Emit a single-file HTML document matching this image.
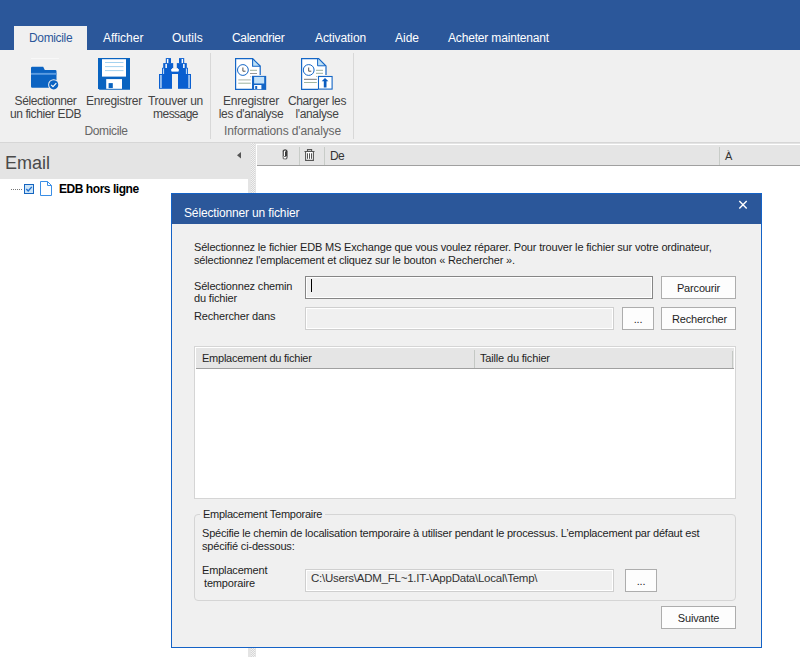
<!DOCTYPE html>
<html><head><meta charset="utf-8">
<style>
*{margin:0;padding:0;box-sizing:border-box}
html,body{width:800px;height:657px;overflow:hidden;background:#fff;font-family:"Liberation Sans",sans-serif;color:#222}
.a{position:absolute;white-space:nowrap}
.t12{font-size:12px;line-height:12px}
.t11{font-size:11px;line-height:11px;letter-spacing:-0.17px;color:#1e1e1e}
#topbar{position:absolute;left:0;top:0;width:800px;height:50px;background:#2b579a}
.tab{color:#fff}
#ribbon{position:absolute;left:0;top:50px;width:800px;height:93px;background:#f0f0f0;border-bottom:1px solid #d6d6d6}
.rb{color:#444}
.sep{position:absolute;top:53px;width:1px;height:86px;background:#d8d8d8}
#lhead{position:absolute;left:0;top:143px;width:248px;height:36px;background:#e4e4e4}
#split{position:absolute;left:248px;top:143px;width:8px;height:514px;background:#e4e4e4}
#chk{position:absolute;left:251px;top:143px;width:4px;height:514px;background-color:#f2f2f2;background-image:conic-gradient(#d6d6d6 25%,transparent 0 50%,#d6d6d6 0 75%,transparent 0);background-size:2px 2px}
#rpane{position:absolute;left:256px;top:144px;width:544px;height:513px;background:#fff}
#rtop{position:absolute;left:256px;top:143px;width:544px;height:1px;background:#e4e4e4}
#rhead{position:absolute;left:257px;top:145px;width:543px;height:21px;background:#e5e5e5;border-bottom:1px solid #a0a0a0}
#dlg{position:absolute;left:171px;top:193px;width:591px;height:455px;background:#f0f0f0;border:1px solid #1462c6}
#dtitle{position:absolute;left:0;top:0;width:589px;height:30px;background:#2b579a}
.box{position:absolute}
.btn{position:absolute;background:#fdfdfd;border:1px solid #adadad}
.tb{position:absolute;border:1px solid #868686;background:#f0f0f0;box-shadow:inset 0 0 0 1px #fff}
.tbd{position:absolute;border:1px solid #cfcfcf;background:#f0f0f0;box-shadow:inset 0 0 0 1px #fff}
</style></head><body>
<div id="topbar"></div>
<div class="a" style="left:14px;top:26px;width:73px;height:24px;background:#f0f0f0"></div>
<div class="a t12" style="left:29px;top:32px;color:#2b579a;letter-spacing:-0.35px">Domicile</div>
<div class="a t12 tab" style="left:103px;top:32px">Afficher</div>
<div class="a t12 tab" style="left:172px;top:32px">Outils</div>
<div class="a t12 tab" style="left:232px;top:32px;letter-spacing:-0.3px">Calendrier</div>
<div class="a t12 tab" style="left:315px;top:32px;letter-spacing:-0.1px">Activation</div>
<div class="a t12 tab" style="left:395px;top:32px">Aide</div>
<div class="a t12 tab" style="left:448px;top:32px;letter-spacing:-0.17px">Acheter maintenant</div>

<div id="ribbon"></div>
<div class="sep" style="left:210px"></div>
<div class="sep" style="left:353px"></div>

<!-- ribbon labels -->
<div class="a t12 rb" style="left:0;top:95px;width:91px;text-align:center;letter-spacing:-0.4px">Sélectionner</div>
<div class="a t12 rb" style="left:0;top:108px;width:91px;text-align:center;letter-spacing:-0.4px">un fichier EDB</div>
<div class="a t12 rb" style="left:86px;top:95px;width:56px;text-align:center;letter-spacing:-0.25px">Enregistrer</div>
<div class="a t12 rb" style="left:146px;top:95px;width:59px;text-align:center;letter-spacing:-0.25px">Trouver un</div>
<div class="a t12 rb" style="left:146px;top:108px;width:59px;text-align:center;letter-spacing:-0.55px">message</div>
<div class="a t12 rb" style="left:66px;top:125px;width:80px;text-align:center;color:#666;letter-spacing:-0.35px">Domicile</div>
<div class="a t12 rb" style="left:217px;top:95px;width:68px;text-align:center;letter-spacing:-0.25px">Enregistrer</div>
<div class="a t12 rb" style="left:217px;top:108px;width:68px;text-align:center;letter-spacing:-0.35px">les d'analyse</div>
<div class="a t12 rb" style="left:286px;top:95px;width:62px;text-align:center;letter-spacing:-0.35px">Charger les</div>
<div class="a t12 rb" style="left:286px;top:108px;width:62px;text-align:center;letter-spacing:-0.35px">l'analyse</div>
<div class="a t12 rb" style="left:212px;top:125px;width:141px;text-align:center;color:#666;letter-spacing:-0.12px">Informations d'analyse</div>

<!-- panes -->
<div id="lhead"></div>
<div class="a" style="left:5px;top:154px;font-size:18px;line-height:18px;color:#4a4a4a">Email</div>
<div id="split"></div><div id="chk"></div><div id="rtop"></div>
<div id="rpane"></div>
<div id="rhead"></div>
<div class="a t12" style="left:330px;top:150px;color:#333;letter-spacing:-0.6px">De</div>
<div class="a" style="left:725px;top:150px;color:#333;font-size:11px;line-height:12px">À</div>
<div class="a t12" style="left:59px;top:183px;font-weight:bold;color:#000;letter-spacing:-0.45px">EDB hors ligne</div>


<!-- icons -->
<svg class="a" style="left:26px;top:54px" width="40" height="40" viewBox="0 0 40 40">
  <rect x="5" y="4" width="28" height="0.8" fill="#fafafa"/>
  <path d="M5 14 Q5 12.8 6.2 12.8 L17.2 12.8 L18.8 16 L29.3 16 Q30.5 16 30.5 17.2 L30.5 33.8 L6.2 33.8 Q5 33.8 5 32.6 Z" fill="#0b63c2"/>
  <rect x="5" y="18.9" width="25.5" height="1.9" fill="#5a9be0"/>
  <circle cx="27.7" cy="30.8" r="5.6" fill="#f0f0f0"/>
  <circle cx="27.7" cy="30.8" r="4.6" fill="#0b63c2"/>
  <path d="M25.2 30.9 L27 32.7 L30.3 29.2" stroke="#fff" stroke-width="1.1" fill="none"/>
</svg>
<svg class="a" style="left:94px;top:54px" width="40" height="40" viewBox="0 0 40 40">
  <path d="M4 4 L36 4 L36 35.8 L5.5 35.8 L4 34.3 Z" fill="#0963c0"/>
  <rect x="8" y="5.2" width="24" height="17.4" fill="#fff"/>
  <rect x="11" y="8" width="18.5" height="1" fill="#a4d2ef"/>
  <rect x="11" y="12.1" width="18.5" height="1" fill="#a4d2ef"/>
  <rect x="11" y="16.1" width="18.5" height="1" fill="#a4d2ef"/>
  <rect x="12.2" y="25.1" width="15.8" height="9.7" fill="#fff"/>
  <rect x="14.6" y="29.1" width="4.2" height="5" fill="#0963c0"/>
</svg>
<svg class="a" style="left:155px;top:54px" width="40" height="40" viewBox="0 0 40 40">
  <g fill="#0a5fd0">
    <rect x="4" y="20" width="13" height="14.8"/><rect x="7" y="13.8" width="10" height="6.5"/><rect x="8.2" y="9.1" width="10" height="5"/><rect x="10.8" y="4.1" width="5.2" height="5"/>
    <rect x="23" y="20" width="13" height="14.8"/><rect x="23" y="13.8" width="10" height="6.5"/><rect x="21.8" y="9.1" width="10" height="5"/><rect x="24" y="4.1" width="5.2" height="5"/>
    <rect x="16" y="17.4" width="8" height="2.6"/>
  </g>
  <g fill="#b8d4f4">
    <rect x="5.2" y="21" width="1.5" height="13"/><rect x="33.3" y="21" width="1.5" height="13"/>
    <rect x="7.9" y="14.5" width="1.2" height="5.5"/><rect x="30.9" y="14.5" width="1.2" height="5.5"/>
  </g>
  <g fill="#ffffff">
    <rect x="10.4" y="10" width="1.5" height="4"/><rect x="28.1" y="10" width="1.5" height="4"/>
    <rect x="11.9" y="5" width="1.5" height="4"/><rect x="26.6" y="5" width="1.5" height="4"/>
    <rect x="16.2" y="15" width="7.6" height="2.4"/>
  </g>
</svg>
<svg class="a" style="left:231px;top:54px" width="40" height="40" viewBox="0 0 40 40">
  <path d="M4.6 4.6 L21.6 4.6 L29.2 12 L29.2 21 L21 21 L21 35.2 L4.6 35.2 Z" fill="#fff"/>
  <path d="M21.6 4.6 L21.6 12.3 L29.2 12.3 Z" fill="#bde0f6"/>
  <path d="M21.2 35.4 L4.6 35.4 L4.6 4.6 L21.6 4.6 L29.2 12 L29.2 21" stroke="#1466c6" stroke-width="1.2" fill="none"/>
  <path d="M21.6 4.6 L21.6 12.3 L29.2 12.3" stroke="#1466c6" stroke-width="1.1" fill="none"/>
  <circle cx="11.9" cy="16" r="5.4" stroke="#1466c6" stroke-width="1" fill="#fff"/>
  <path d="M11.9 13.5 L11.9 17.2 L14.5 17.2" stroke="#555" stroke-width="1" fill="none"/>
  <rect x="19" y="15.8" width="7" height="1" fill="#9fb49f"/>
  <rect x="19" y="19" width="7" height="1" fill="#999"/>
  <rect x="19.3" y="22.2" width="0.9" height="1" fill="#999"/>
  <rect x="7.3" y="25.4" width="12.5" height="1" fill="#a9b4a9"/>
  <rect x="7.3" y="28.7" width="12.5" height="1" fill="#9fb49f"/>
  <rect x="21" y="21.9" width="14.2" height="14" fill="#1466c6"/>
  <rect x="23.1" y="22.9" width="10.1" height="6.6" fill="#c4e2f8"/>
  <rect x="23.1" y="31" width="7.3" height="4.2" fill="#fff"/>
  <rect x="24.2" y="32" width="2" height="3" fill="#1466c6"/>
</svg>
<svg class="a" style="left:297px;top:54px" width="40" height="40" viewBox="0 0 40 40">
  <path d="M4.6 4.6 L21.6 4.6 L29 12 L29 21 L21 21 L21 35.2 L4.6 35.2 Z" fill="#fff"/>
  <path d="M20.6 4.6 L20.6 11.8 L28 11.8 Z" fill="#bde0f6"/>
  <path d="M21.2 35.4 L4.6 35.4 L4.6 4.6 L21.6 4.6 L29 12 L29 21" stroke="#1466c6" stroke-width="1.2" fill="none"/>
  <path d="M20.6 5 L20.6 11.8 L28 11.8" stroke="#1466c6" stroke-width="1" fill="none"/>
  <circle cx="11.7" cy="16" r="5.4" stroke="#1466c6" stroke-width="1" fill="#fff"/>
  <path d="M11.7 13.5 L11.7 17.2 L14.3 17.2" stroke="#555" stroke-width="1" fill="none"/>
  <rect x="19" y="15.8" width="7" height="1" fill="#9fb49f"/>
  <rect x="19" y="18.8" width="7" height="1" fill="#9fb49f"/>
  <rect x="19.3" y="22" width="0.9" height="1" fill="#9fb49f"/>
  <rect x="7" y="24.8" width="12.8" height="1" fill="#777"/>
  <rect x="7" y="28" width="12.8" height="1" fill="#9fb49f"/>
  <rect x="21.5" y="22.5" width="13.6" height="12.6" stroke="#1466c6" stroke-width="1.1" fill="#fff"/>
  <path d="M24.7 27.3 L28 24 L31.4 27.3 L29.5 27.3 L29.5 33.5 L26.8 33.5 L26.8 27.3 Z" fill="#0a5cc0"/>
</svg>
<!-- tree -->
<svg class="a" style="left:8px;top:178px" width="50" height="22" viewBox="0 0 50 22">
  <g fill="#777"><rect x="3" y="11" width="1" height="1"/><rect x="5" y="11" width="1" height="1"/><rect x="7" y="11" width="1" height="1"/><rect x="9" y="11" width="1" height="1"/><rect x="11" y="11" width="1" height="1"/><rect x="13" y="11" width="1" height="1"/></g>
  <rect x="16.5" y="6.5" width="9" height="9" fill="#cce4f7" stroke="#1565c0" stroke-width="1"/>
  <path d="M18.3 11 L20.2 12.9 L23.8 8.9" stroke="#1e6fd0" stroke-width="1.4" fill="none"/>
  <path d="M32.5 3.5 L39.5 3.5 L43.5 7.5 L43.5 17.5 L32.5 17.5 Z" fill="#fff" stroke="#3a8ee6" stroke-width="1"/>
  <path d="M39.5 3.5 L39.5 7.5 L43.5 7.5" fill="none" stroke="#3a8ee6" stroke-width="1"/>
</svg>
<!-- list header icons -->
<svg class="a" style="left:272px;top:144px" width="60" height="24" viewBox="0 0 60 24">
  <rect x="10.3" y="5" width="5.6" height="10.7" rx="2.6" fill="#3a3a3a" stroke="#f6f6f6" stroke-width="0.6"/>
  <path d="M12.4 12.4 L12.4 8 Q12.4 6.9 13.6 7.1" stroke="#fff" stroke-width="1.2" fill="none"/>
  <path d="M11.3 12.2 L14.7 12.2 Q14.7 14.7 13 14.7 Q11.3 14.7 11.3 12.2 Z" fill="#fff"/>
  <rect x="12.2" y="12.1" width="1.6" height="0.8" fill="#3a3a3a"/>
  <rect x="33.6" y="7.8" width="7.8" height="8.4" fill="#fff"/><path d="M32.5 7.5 L42.5 7.5 M35.5 7.5 L35.5 5.6 L39.6 5.6 L39.6 7.5 M33.6 7.5 L33.6 16.4 L41.4 16.4 L41.4 7.5" stroke="#555" stroke-width="1.1" fill="none"/><path d="M35.5 9.3 L35.5 14.8 M37.5 9.3 L37.5 14.8 M39.5 9.3 L39.5 14.8" stroke="#555" stroke-width="1" fill="none"/>
</svg>
<div class="a" style="left:299px;top:147px;width:1px;height:18px;background:#c8ccc8"></div>
<div class="a" style="left:324px;top:147px;width:1px;height:18px;background:#c8ccc8"></div>
<div class="a" style="left:719px;top:147px;width:1px;height:18px;background:#c8ccc8"></div>
<svg class="a" style="left:234px;top:150px" width="10" height="10" viewBox="0 0 10 10"><path d="M7 2 L3 5.2 L7 8.5 Z" fill="#555"/></svg>

<!-- dialog -->
<div id="dlg">
  <div id="dtitle"></div>
</div>
<svg class="a" style="left:737px;top:198px" width="12" height="12" viewBox="0 0 12 12"><path d="M2.3 3 L9.7 10.4 M9.7 3 L2.3 10.4" stroke="#fff" stroke-width="1.4"/></svg>
<div class="a t12" style="left:184px;top:207px;color:#fff;letter-spacing:-0.15px">Sélectionner un fichier</div>

<div class="a t11" style="left:194px;top:242px">Sélectionnez le fichier EDB MS Exchange que vous voulez réparer. Pour trouver le fichier sur votre ordinateur,</div>
<div class="a t11" style="left:194px;top:255px">sélectionnez l'emplacement et cliquez sur le bouton « Rechercher ».</div>
<div class="a t11" style="left:194px;top:281px">Sélectionnez chemin</div>
<div class="a t11" style="left:194px;top:293px">du fichier</div>
<div class="a t11" style="left:194px;top:311px">Rechercher dans</div>

<div class="tb" style="left:305px;top:276px;width:348px;height:23px"></div>
<div class="a" style="left:311px;top:279px;width:1px;height:13px;background:#000"></div>
<div class="tbd" style="left:305px;top:307px;width:309px;height:23px"></div>
<div class="btn" style="left:661px;top:276px;width:75px;height:23px"></div>
<div class="a t11" style="left:661px;top:283px;width:75px;text-align:center">Parcourir</div>
<div class="btn" style="left:622px;top:307px;width:32px;height:23px"></div>
<div class="a t11" style="left:622px;top:314px;width:32px;text-align:center">...</div>
<div class="btn" style="left:661px;top:307px;width:75px;height:23px"></div>
<div class="a t11" style="left:662px;top:314px;width:75px;text-align:center">Rechercher</div>

<!-- list -->
<div class="box" style="left:194px;top:346px;width:542px;height:153px;border:1px solid #d5d5d5;background:#fff"></div>
<div class="box" style="left:196px;top:348px;width:538px;height:21px;background:#e5e5e5;border-bottom:1px solid #a0a0a0"></div>
<div class="box" style="left:474px;top:350px;width:1px;height:18px;background:#c4c8c4"></div>
<div class="box" style="left:732px;top:351px;width:1px;height:17px;background:#c4c8c4"></div>
<div class="a t11" style="left:202px;top:353px;letter-spacing:-0.24px">Emplacement du fichier</div>
<div class="a t11" style="left:480px;top:353px">Taille du fichier</div>

<!-- group -->
<div class="box" style="left:194px;top:514px;width:542px;height:87px;border:1px solid #d5d5d5;border-radius:4px"></div>
<div class="box" style="left:200px;top:508px;width:125px;height:12px;background:#f0f0f0"></div>
<div class="a t11" style="left:203px;top:509px;letter-spacing:-0.27px">Emplacement Temporaire</div>
<div class="a t11" style="left:202px;top:528px;letter-spacing:-0.21px">Spécifie le chemin de localisation temporaire à utiliser pendant le processus. L’emplacement par défaut est</div>
<div class="a t11" style="left:202px;top:541px">spécifié ci-dessous:</div>
<div class="a t11" style="left:202px;top:565px">Emplacement</div>
<div class="a t11" style="left:204px;top:578px">temporaire</div>
<div class="tbd" style="left:305px;top:569px;width:309px;height:23px"></div>
<div class="a" style="left:311px;top:573px;font-size:11.5px;line-height:11.5px;letter-spacing:-0.24px;color:#333">C:\Users\ADM_FL~1.IT-\AppData\Local\Temp\</div>
<div class="btn" style="left:625px;top:569px;width:32px;height:23px"></div>
<div class="a t11" style="left:625px;top:576px;width:32px;text-align:center">...</div>

<div class="btn" style="left:661px;top:606px;width:75px;height:23px"></div>
<div class="a t11" style="left:661px;top:613px;width:75px;text-align:center">Suivante</div>
</body></html>
